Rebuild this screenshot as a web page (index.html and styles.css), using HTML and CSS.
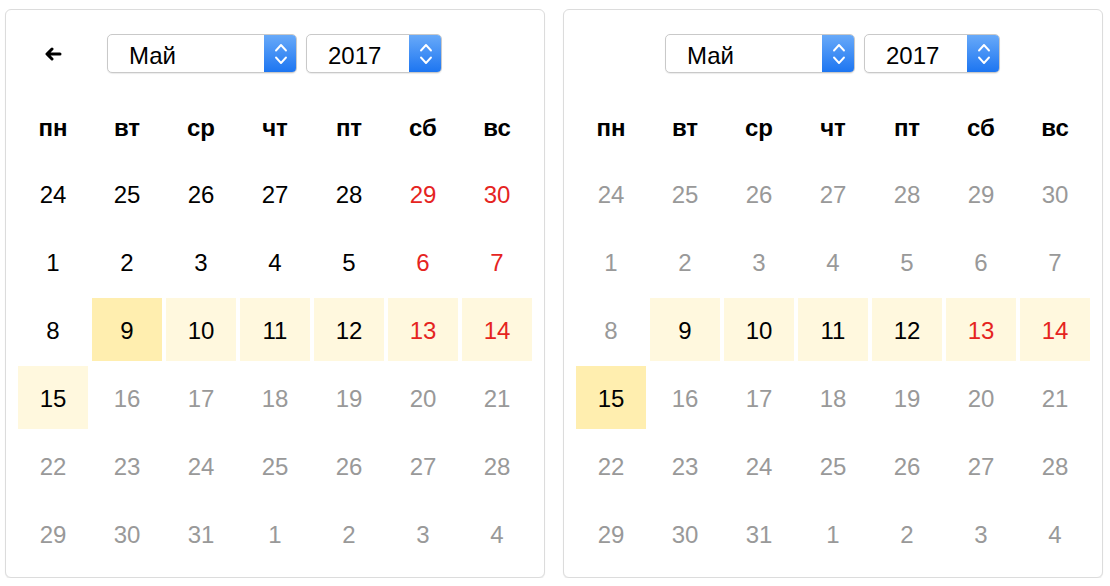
FILE: index.html
```html
<!DOCTYPE html>
<html lang="ru">
<head>
  <meta charset="UTF-8">
  <meta name="viewport" content="width=device-width, initial-scale=1.0">
  <title>Выбор периода</title>
  <link rel="stylesheet" href="styles.css">
</head>
<body>
  <div class="calendars">

    <div class="calendar">
      <div class="calendar-header">
        <button class="nav-prev" type="button" aria-label="Предыдущий месяц">
          <svg width="18" height="14" viewBox="0 0 18 14"><path d="M16 7H3.5M8 2L3 7l5 5" fill="none" stroke="#000" stroke-width="3" stroke-linecap="round" stroke-linejoin="round"/></svg>
        </button>
        <div class="select select-month">
          <span>Май</span>
          <span class="select-arrows"><svg width="14" height="24" viewBox="0 0 14 24"><path d="M2 8.5l5-5.5 5 5.5M2 15.5l5 5.5 5-5.5" fill="none" stroke="#fff" stroke-width="1.9" stroke-linecap="round" stroke-linejoin="round"/></svg></span>
        </div>
        <div class="select select-year">
          <span>2017</span>
          <span class="select-arrows"><svg width="14" height="24" viewBox="0 0 14 24"><path d="M2 8.5l5-5.5 5 5.5M2 15.5l5 5.5 5-5.5" fill="none" stroke="#fff" stroke-width="1.9" stroke-linecap="round" stroke-linejoin="round"/></svg></span>
        </div>
      </div>

      <div class="grid">
        <div class="weekday">пн</div><div class="weekday">вт</div><div class="weekday">ср</div><div class="weekday">чт</div><div class="weekday">пт</div><div class="weekday">сб</div><div class="weekday">вс</div>

        <div class="day">24</div><div class="day">25</div><div class="day">26</div><div class="day">27</div><div class="day">28</div><div class="day weekend">29</div><div class="day weekend">30</div>
        <div class="day">1</div><div class="day">2</div><div class="day">3</div><div class="day">4</div><div class="day">5</div><div class="day weekend">6</div><div class="day weekend">7</div>
        <div class="day">8</div><div class="day edge">9</div><div class="day range">10</div><div class="day range">11</div><div class="day range">12</div><div class="day range weekend">13</div><div class="day range weekend">14</div>
        <div class="day range">15</div><div class="day muted">16</div><div class="day muted">17</div><div class="day muted">18</div><div class="day muted">19</div><div class="day muted">20</div><div class="day muted">21</div>
        <div class="day muted">22</div><div class="day muted">23</div><div class="day muted">24</div><div class="day muted">25</div><div class="day muted">26</div><div class="day muted">27</div><div class="day muted">28</div>
        <div class="day muted">29</div><div class="day muted">30</div><div class="day muted">31</div><div class="day muted">1</div><div class="day muted">2</div><div class="day muted">3</div><div class="day muted">4</div>
      </div>
    </div>

    <div class="calendar">
      <div class="calendar-header">
        <div class="select select-month">
          <span>Май</span>
          <span class="select-arrows"><svg width="14" height="24" viewBox="0 0 14 24"><path d="M2 8.5l5-5.5 5 5.5M2 15.5l5 5.5 5-5.5" fill="none" stroke="#fff" stroke-width="1.9" stroke-linecap="round" stroke-linejoin="round"/></svg></span>
        </div>
        <div class="select select-year">
          <span>2017</span>
          <span class="select-arrows"><svg width="14" height="24" viewBox="0 0 14 24"><path d="M2 8.5l5-5.5 5 5.5M2 15.5l5 5.5 5-5.5" fill="none" stroke="#fff" stroke-width="1.9" stroke-linecap="round" stroke-linejoin="round"/></svg></span>
        </div>
      </div>

      <div class="grid">
        <div class="weekday">пн</div><div class="weekday">вт</div><div class="weekday">ср</div><div class="weekday">чт</div><div class="weekday">пт</div><div class="weekday">сб</div><div class="weekday">вс</div>

        <div class="day muted">24</div><div class="day muted">25</div><div class="day muted">26</div><div class="day muted">27</div><div class="day muted">28</div><div class="day muted">29</div><div class="day muted">30</div>
        <div class="day muted">1</div><div class="day muted">2</div><div class="day muted">3</div><div class="day muted">4</div><div class="day muted">5</div><div class="day muted">6</div><div class="day muted">7</div>
        <div class="day muted">8</div><div class="day range">9</div><div class="day range">10</div><div class="day range">11</div><div class="day range">12</div><div class="day range weekend">13</div><div class="day range weekend">14</div>
        <div class="day edge">15</div><div class="day muted">16</div><div class="day muted">17</div><div class="day muted">18</div><div class="day muted">19</div><div class="day muted">20</div><div class="day muted">21</div>
        <div class="day muted">22</div><div class="day muted">23</div><div class="day muted">24</div><div class="day muted">25</div><div class="day muted">26</div><div class="day muted">27</div><div class="day muted">28</div>
        <div class="day muted">29</div><div class="day muted">30</div><div class="day muted">31</div><div class="day muted">1</div><div class="day muted">2</div><div class="day muted">3</div><div class="day muted">4</div>
      </div>
    </div>

  </div>
</body>
</html>
```

FILE: styles.css
```css
body {
    margin: 0;
    padding: 0;
    background-color: #ffffff;
    color: #000000;
    font-family: "Liberation Sans", Arial, Helvetica, sans-serif;
}

.calendars {
    display: flex;
    gap: 18px;
    padding: 9px 0 0 5px;
}

.calendar {
    width: 540px;
    height: 569px;
    box-sizing: border-box;
    padding: 12px;
    border: 1px solid #dcdcdc;
    border-radius: 6px;
    background-color: #ffffff;
    box-shadow: 0 1px 1px rgba(0, 0, 0, 0.08);
}

.calendar-header {
    position: relative;
    display: flex;
    justify-content: center;
    gap: 9px;
    height: 39px;
    margin-top: 12px;
    padding-right: 1px;
}

.nav-prev {
    position: absolute;
    left: 23px;
    top: 8px;
    width: 24px;
    height: 24px;
    padding: 0;
    border: none;
    background: none;
    display: flex;
    align-items: center;
    justify-content: center;
    cursor: pointer;
}

.select {
    position: relative;
    display: flex;
    align-items: center;
    box-sizing: border-box;
    height: 39px;
    padding: 4px 0 0 21px;
    border: 1px solid #c9c9c9;
    border-radius: 5px;
    background-color: #ffffff;
    box-shadow: 0 1px 1px rgba(0, 0, 0, 0.08);
    font-size: 24px;
    overflow: hidden;
}

.select-month {
    width: 190px;
}

.select-year {
    width: 136px;
}

.select-arrows {
    position: absolute;
    top: -1px;
    right: -1px;
    bottom: -1px;
    width: 33px;
    display: flex;
    align-items: center;
    justify-content: center;
    border-radius: 0 5px 5px 0;
    background: linear-gradient(to bottom, #6aabf9, #1b74f1);
}

.grid {
    display: grid;
    grid-template-columns: repeat(7, 70px);
    grid-auto-rows: 63px;
    column-gap: 4px;
    row-gap: 5px;
    margin-top: 21px;
}

.weekday,
.day {
    display: flex;
    align-items: center;
    justify-content: center;
    box-sizing: border-box;
    padding-top: 3px;
    font-size: 24px;
}

.weekday {
    padding-top: 5px;
    font-weight: bold;
}

.weekend {
    color: #e5241f;
}

.muted {
    color: #999999;
}

.range {
    background-color: #fff8de;
}

.edge {
    background-color: #ffeeaf;
}
```
